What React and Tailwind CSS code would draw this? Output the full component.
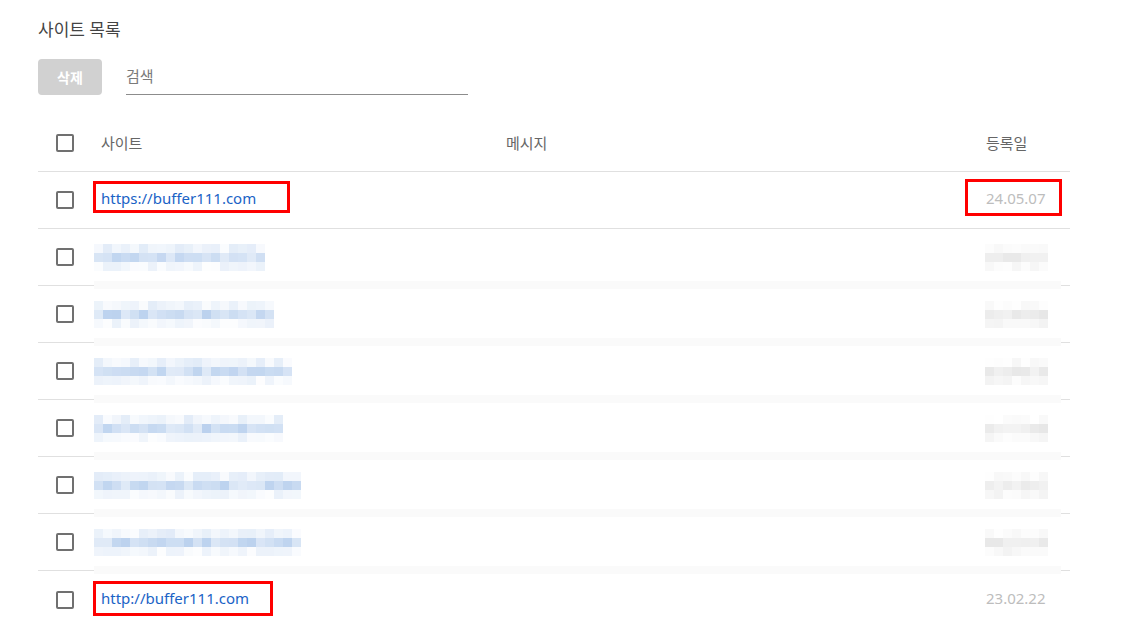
import { useState } from "react";

const font = { fontFamily: '"Noto Sans", "Noto Sans CJK KR", sans-serif' };

// redacted rows: number of mosaic columns for the site text
const rows = [
  { id: 1, site: "https://buffer111.com", date: "24.05.07", boxW: 197, boxH: 32, dateBox: true },
  { id: 2, cols: 19, seed: 3 },
  { id: 3, cols: 20, seed: 7 },
  { id: 4, cols: 22, seed: 11 },
  { id: 5, cols: 21, seed: 17 },
  { id: 6, cols: 23, seed: 23 },
  { id: 7, cols: 23, seed: 31 },
  { id: 8, site: "http://buffer111.com", date: "23.02.22", boxW: 180, boxH: 35 },
];

const rand = (seed) => {
  let s = seed * 9301 + 49297;
  return () => {
    s = (s * 9301 + 49297) % 233280;
    return s / 233280;
  };
};

const mix = (t, [r, g, b]) =>
  `rgb(${Math.round(255 - (255 - r) * t)},${Math.round(255 - (255 - g) * t)},${Math.round(255 - (255 - b) * t)})`;

const Mosaic = ({ cols, seed, tint, ranges }) => {
  const r = rand(seed);
  const cells = [];
  ranges.forEach(([lo, hi], y) => {
    for (let x = 0; x < cols; x++) {
      const t = lo + r() * (hi - lo);
      cells.push(<rect key={`${x}-${y}`} x={x * 9} y={y * 9} width="9" height="9" fill={mix(t, tint)} />);
    }
  });
  return (
    <svg width={cols * 9} height={ranges.length * 9} className="block">
      {cells}
    </svg>
  );
};

const Checkbox = ({ checked, onChange }) => (
  <button
    onClick={onChange}
    className="w-[18px] h-[18px] rounded-[2px] border-2 border-[#707070] bg-white block"
  >
    {checked && <span className="block w-full h-full bg-[#707070]" />}
  </button>
);

const App = () => {
  const [checked, setChecked] = useState({});
  const toggle = (id) => setChecked({ ...checked, [id]: !checked[id] });

  return (
    <div className="min-h-screen bg-white px-[38px] pt-[18px]" style={font}>
      <h2 className="text-[17px] leading-[24px] text-[#444444]">사이트 목록</h2>

      {/* toolbar */}
      <div className="flex items-end mt-[17px]">
        <button className="w-[64px] h-[36px] rounded-[4px] bg-[#d1d1d1] text-white text-[14px] font-bold">
          삭제
        </button>
        <div className="ml-[24px] w-[342px] h-[36px] border-b border-[#8c8c8c] flex items-center">
          <input
            placeholder="검색"
            className="w-full outline-none text-[15px] text-[#333] placeholder:text-[#7a7a7a] bg-transparent"
          />
        </div>
      </div>

      {/* table */}
      <div className="mt-[20px] w-[1032px]">
        <div className="flex items-center h-[57px] border-b border-[#e0e0e0] text-[15px] text-[#666666]">
          <div className="w-[55px] pl-[18px]">
            <Checkbox checked={checked.all} onChange={() => toggle("all")} />
          </div>
          <div className="w-[413px] pl-[8px]">사이트</div>
          <div className="w-[480px]">메시지</div>
          <div className="flex-1">등록일</div>
        </div>

        {rows.map((row) => (
          <div
            key={row.id}
            className={`relative flex items-center h-[57px] text-[15px] leading-[20px] ${row.id === 8 ? "" : "border-b border-[#e0e0e0]"}`}
          >
            <div className="w-[55px] pl-[18px]">
              <Checkbox checked={checked[row.id]} onChange={() => toggle(row.id)} />
            </div>
            <div className="w-[413px] pl-[8px]">
              {row.site ? (
                <span className="relative top-[-2px] inline-block text-[#1a63c6]">
                  {row.site}
                  <span
                    className="absolute left-[-8px] top-[-7px] border-[3px] border-[#ff0000]"
                    style={{ width: row.boxW, height: row.boxH }}
                  />
                </span>
              ) : (
                <div className="-ml-[7px]">
                  <Mosaic
                    cols={row.cols}
                    seed={row.seed}
                    tint={[170, 198, 234]}
                    ranges={[
                      [0.05, 0.35],
                      [0.35, 0.8],
                      [0.02, 0.25],
                    ]}
                  />
                </div>
              )}
            </div>
            <div className="w-[480px]" />
            <div className="flex-1">
              {row.site ? (
                <span className="relative top-[-2px] inline-block text-[#bdbdbd]">
                  {row.date}
                  {row.dateBox && (
                    <span className="absolute left-[-21px] top-[-9px] w-[97px] h-[37px] border-[3px] border-[#ff0000]" />
                  )}
                </span>
              ) : (
                <div className="-ml-[1px]">
                  <Mosaic
                    cols={7}
                    seed={row.seed + 5}
                    tint={[215, 215, 215]}
                    ranges={[
                      [0.0, 0.2],
                      [0.3, 0.6],
                      [0.05, 0.3],
                    ]}
                  />
                </div>
              )}
            </div>
            {row.cols && (
              <div className="absolute left-[56px] bottom-[-4px] w-[967px] h-[8px] bg-[#fafafa]" />
            )}
          </div>
        ))}
      </div>
    </div>
  );
};

export default App;
